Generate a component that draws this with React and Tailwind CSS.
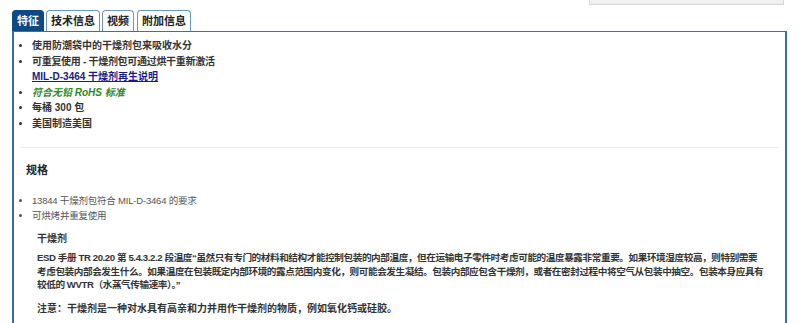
import React from 'react';

const tabs = ['特征', '技术信息', '视频', '附加信息'];

const App = () => {
  return (
    <div className="w-[800px] h-[323px] overflow-hidden bg-white text-[#333] font-['Liberation_Sans','Noto_Sans_CJK_SC',sans-serif]">
      {/* top-right box cut by the viewport */}
      <div className="ml-[589px] w-[195px] h-[5px] bg-[#f0f0f0] border border-t-0 border-[#d8d8d8]" />

      {/* Tabs */}
      <div className="mt-[5px] ml-[12px] flex items-end gap-[2px]">
        {tabs.map((t, i) => (
          <div
            key={t}
            className={`h-[21px] px-[4px] flex items-center rounded-t-[4px] text-[11px] font-bold border border-b-0 ${
              i === 0
                ? 'bg-[#0a4a85] border-[#0a4a85] text-white'
                : 'bg-white border-[#6c97b8] text-[#222]'
            } ${i === 3 ? 'ml-[1px]' : ''}`}
          >
            {t}
          </div>
        ))}
      </div>

      {/* Panel */}
      <div className="ml-[12px] w-[775px] h-[300px] border-t border-l-2 border-r-2 border-[#3f6f9e]">
        <ul className="list-disc pl-[18px] pt-[6px] text-[10px] leading-[15.5px] font-bold text-[#333] marker:text-[#333]">
          <li>使用防潮袋中的干燥剂包来吸收水分</li>
          <li className="tracking-[-0.3px]">可重复使用 - 干燥剂包可通过烘干重新激活</li>
          <li className="list-none">
            <a href="#" className="text-[#1a1a8c] underline">MIL-D-3464 干燥剂再生说明</a>
          </li>
          <li className="italic text-[#2a8a1e]">符合无铅 RoHS 标准</li>
          <li>每桶 300 包</li>
          <li>美国制造美国</li>
        </ul>

        <div className="mt-[16px] ml-[6px] mr-[7px] h-px bg-[#ececec]" />

        <h3 className="mt-[15px] ml-[12px] text-[11px] leading-[15px] font-bold text-[#222]">规格</h3>

        <ul className="mt-[15px] list-disc pl-[18px] text-[9.5px] leading-[15px] tracking-[-0.2px] text-[#555]">
          <li>13844 干燥剂包符合 MIL-D-3464 的要求</li>
          <li>可烘烤并重复使用</li>
        </ul>

        <div className="ml-[23px] mr-[6px] text-[10px] font-bold text-[#333] whitespace-nowrap">
          <p className="mt-[8px] leading-[15px]">干燥剂</p>
          <p className="mt-[5px] leading-[13.5px] text-[9.6px] tracking-[-0.4px]">
            ESD 手册 TR 20.20 第 5.4.3.2.2 段温度“虽然只有专门的材料和结构才能控制包装的内部温度，但在运输电子零件时考虑可能的温度暴露非常重要。如果环境湿度较高，则特别需要
            <br />
            考虑包装内部会发生什么。如果温度在包装既定内部环境的露点范围内变化，则可能会发生凝结。包装内部应包含干燥剂，或者在密封过程中将空气从包装中抽空。包装本身应具有
            <br />
            较低的 WVTR（水蒸气传输速率）。”
          </p>
          <p className="mt-[9px] leading-[15px]">注意：干燥剂是一种对水具有高亲和力并用作干燥剂的物质，例如氧化钙或硅胶。</p>
        </div>
      </div>
    </div>
  );
};

export default App;
